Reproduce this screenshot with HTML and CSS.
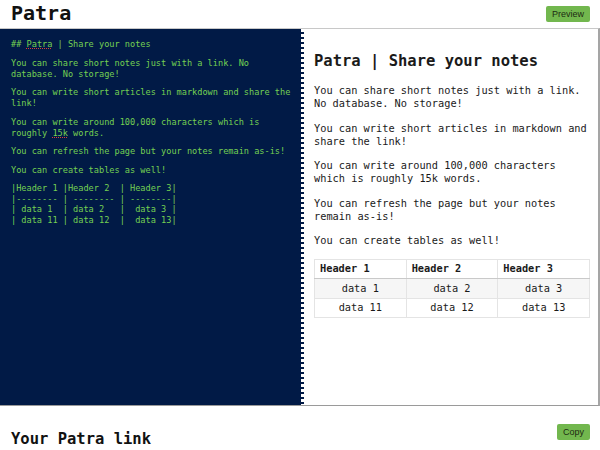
FILE: index.html
```
<!DOCTYPE html>
<html>
<head>
<meta charset="utf-8">
<link rel="stylesheet" href="styles.css">
</head>
<body>
<header class="top">
  <h1 class="logo">Patra</h1>
  <button class="btn">Preview</button>
</header>
<main class="workspace">
  <section class="editor">
    <p>## <span class="typo">Patra</span> | Share your notes</p>
    <p>You can share short notes just with a link. No database. No storage!</p>
    <p>You can write short articles in markdown and share the link!</p>
    <p>You can write around 100,000 characters which is roughly <span class="typo">15k</span> words.</p>
    <p>You can refresh the page but your notes remain as-is!</p>
    <p>You can create tables as well!</p>
<pre class="code">|Header 1 |Header 2  | Header 3|
|-------- | -------- | --------|
| data 1  | data 2   |  data 3 |
| data 11 | data 12  |  data 13|</pre>
  </section>
  <div class="divider"></div>
  <section class="preview">
    <h2 class="title">Patra | Share your notes</h2>
    <p>You can share short notes just with a link. No database. No storage!</p>
    <p>You can write short articles in markdown and share the link!</p>
    <p>You can write around 100,000 characters which is roughly 15k words.</p>
    <p>You can refresh the page but your notes remain as-is!</p>
    <p>You can create tables as well!</p>
    <table class="tbl">
      <thead>
        <tr><th>Header 1</th><th>Header 2</th><th>Header 3</th></tr>
      </thead>
      <tbody>
        <tr class="alt"><td>data 1</td><td>data 2</td><td>data 3</td></tr>
        <tr><td>data 11</td><td>data 12</td><td>data 13</td></tr>
      </tbody>
    </table>
  </section>
</main>
<footer class="bottom">
  <h2 class="link-title">Your Patra link</h2>
  <button class="btn">Copy</button>
</footer>
</body>
</html>
```
FILE: styles.css
```
* { box-sizing: border-box; }
html, body { margin: 0; padding: 0; background: #fff; }
body { width: 600px; height: 450px; overflow: hidden; font-family: "DejaVu Sans Mono", monospace; }

.top {
  height: 28px;
  display: flex;
  justify-content: space-between;
  align-items: flex-start;
  padding: 0 10px 0 11px;
}
.logo {
  margin: 0;
  font-size: 20px;
  line-height: 26px;
  font-weight: bold;
  color: #111;
}
.btn {
  font-family: "Liberation Sans", Arial, sans-serif;
  font-size: 9px;
  color: #1d2b12;
  background: #72b74e;
  border: none;
  border-radius: 2px;
  height: 16px;
  padding: 0 6px;
  margin-top: 6px;
  cursor: pointer;
}

.workspace {
  height: 378px;
  display: flex;
  border-top: 1px solid #c8c8c8;
  border-bottom: 1px solid #9a9a9a;
  border-right: 2px solid #a5a5a5;
}
.editor {
  width: 300px;
  background: #011a46;
  color: #74d052;
  font-family: "DejaVu Sans Mono", monospace;
  font-size: 8.6px;
  line-height: 11px;
  padding: 10px 8px 0 11px;
}
.editor p { margin: 0 0 7.5px; }
.typo {
  text-decoration: underline dotted #d8403a;
  text-decoration-thickness: 1px;
  text-underline-offset: 1px;
}
.code {
  margin: 0;
  font-family: inherit;
  font-size: inherit;
  line-height: 10.7px;
  white-space: pre;
}
.divider {
  width: 4px;
  background: repeating-linear-gradient(to bottom, #ffffff 0 3px, #011a46 3px 5px);
  border-left: 1px solid #011a46;
}
.preview {
  flex: 1;
  padding: 22px 8px 0 10px;
  color: #1a1a1a;
  font-size: 10.3px;
  line-height: 13px;
}
.title {
  margin: 0 0 13px;
  font-size: 15.5px;
  line-height: 20px;
  font-weight: bold;
}
.preview p { margin: 0 0 11.5px; }
.tbl {
  border-collapse: collapse;
  width: 276px;
  table-layout: fixed;
  font-size: 10.3px;
}
.tbl th, .tbl td {
  border: 1px solid #e4e4e4;
  height: 19.5px;
  padding: 0 5px;
}
.tbl th { text-align: left; font-weight: bold; border-bottom: 1px solid #c9c9c9; }
.tbl td { text-align: center; }
.tbl .alt td { background: #f6f6f6; }

.bottom {
  display: flex;
  justify-content: space-between;
  align-items: flex-start;
  padding: 0 10px 0 11px;
}
.link-title {
  margin: 23px 0 0;
  font-size: 15.5px;
  line-height: 20px;
  font-weight: bold;
  color: #111;
}
.bottom .btn { margin-top: 18px; }
```
